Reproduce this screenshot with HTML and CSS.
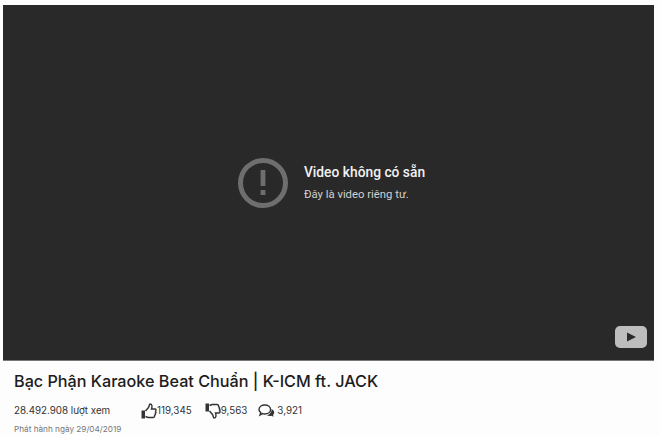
FILE: index.html
```html
<!DOCTYPE html>
<html lang="vi">
<head>
    <meta charset="UTF-8">
    <meta name="viewport" content="width=device-width, initial-scale=1.0">
    <title>Bạc Phận Karaoke Beat Chuẩn</title>
    <link rel="stylesheet" href="styles.css">
</head>
<body>
    <div class="player">
        <div class="error-box">
            <svg class="error-icon" viewBox="0 0 50 50" width="50" height="50">
                <circle cx="25" cy="25" r="22.5" fill="none" stroke="#6e6e6e" stroke-width="5"/>
                <rect x="22.6" y="12" width="4.8" height="16" fill="#6e6e6e"/>
                <rect x="22.6" y="32" width="4.8" height="5" fill="#6e6e6e"/>
            </svg>
            <div class="error-text">
                <h2>Video không có sẵn</h2>
                <p>Đây là video riêng tư.</p>
            </div>
        </div>
        <svg class="yt-logo" viewBox="0 0 32 22" width="32" height="22">
            <rect width="32" height="22" rx="5" fill="#bdbdbd"/>
            <path d="M12 6.5 L21 11 L12 15.5 Z" fill="#2a2a2a"/>
        </svg>
    </div>
    <div class="info">
        <h1>Bạc Phận Karaoke Beat Chuẩn | K-ICM ft. JACK</h1>
        <div class="stats">
            <span class="views">28.492.908 lượt xem</span>
            <span class="stat stat-likes">
                <svg viewBox="0 0 16 16" width="16" height="16">
                    <path d="M0.5 7.5 H4 V15.5 H0.5 Z" fill="#333"/>
                    <path d="M4.5 8 L7.5 4.5 C8.2 3.5 8 2 9 1 C11 1 11.5 3 10.5 6 H14 C15.2 6 15.3 7.5 14.6 8 C15.3 8.8 15 9.8 14.3 10.2 C14.7 11 14.3 12 13.6 12.3 C13.8 13.5 13.2 14.5 12 14.5 H7 L4.5 13.5" fill="none" stroke="#333" stroke-width="1.4"/>
                </svg>
                119,345
            </span>
            <span class="stat">
                <svg viewBox="0 0 16 16" width="16" height="16">
                    <path d="M0.5 0.5 H4 V8.5 H0.5 Z" fill="#333"/>
                    <path d="M4.5 8 L7.5 11.5 C8.2 12.5 8 14 9 15 C11 15 11.5 13 10.5 10 H14 C15.2 10 15.3 8.5 14.6 8 C15.3 7.2 15 6.2 14.3 5.8 C14.7 5 14.3 4 13.6 3.7 C13.8 2.5 13.2 1.5 12 1.5 H7 L4.5 2.5" fill="none" stroke="#333" stroke-width="1.4"/>
                </svg>
                9,563
            </span>
            <span class="stat stat-comments">
                <svg viewBox="0 0 17 16" width="17" height="16">
                    <path d="M1 6.5 C1 3.8 3.6 2 6.8 2 C10 2 12.6 3.8 12.6 6.5 C12.6 9.2 10 11 6.8 11 C6 11 5.2 10.9 4.5 10.6 L2 12 L2.8 9.6 C1.7 8.8 1 7.8 1 6.5 Z" fill="none" stroke="#333" stroke-width="1.4"/>
                    <path d="M13.6 6 C15.2 6.8 16.2 8 16.2 9.4 C16.2 10.4 15.7 11.2 15 11.8 L15.6 13.8 L13.4 12.8 C12 13.2 10 13 8.6 12 C11 12 13.6 10 13.6 6 Z" fill="#333"/>
                </svg>
                3,921
            </span>
        </div>
        <p class="release">Phát hành ngày 29/04/2019</p>
    </div>
</body>
</html>
```

FILE: styles.css
```css
html, body {
    margin: 0;
    padding: 0;
    height: 436px;
    overflow: hidden;
}
body {
    background-color: #fdfdfd;
    color: #222;
    font-family: Inter, "Liberation Sans", sans-serif;
    padding: 5px 6px 0 3px;
    box-sizing: border-box;
}
.player {
    position: relative;
    height: 356px;
    background-color: #292929;
    border-bottom: 1px solid #777;
    box-sizing: border-box;
    display: flex;
    align-items: center;
    justify-content: center;
}
.error-box {
    display: flex;
    align-items: center;
    gap: 16px;
    margin-left: 6px;
}
.error-icon {
    display: block;
}
.error-text {
    font-family: Roboto, "Liberation Sans", sans-serif;
    color: #f1f1f1;
}
.error-text h2 {
    margin: 0 0 6px 0;
    font-size: 13.8px;
    line-height: 18px;
    font-weight: 500;
}
.error-text p {
    margin: 0;
    font-size: 11.3px;
    line-height: 15px;
    color: #d0d0d0;
}
.yt-logo {
    position: absolute;
    right: 7px;
    bottom: 12px;
}
.info {
    padding: 8px 0 0 11px;
}
.info h1 {
    margin: 0;
    font-size: 16.2px;
    line-height: 24px;
    font-weight: 500;
    color: #1c1c1c;
}
.stats {
    display: flex;
    align-items: center;
    margin-top: 10px;
    font-size: 9.8px;
    line-height: 16px;
    color: #333;
}
.views {
    width: 127px;
}
.stat {
    display: flex;
    align-items: center;
    margin-right: 11px;
}
.stat-likes {
    margin-right: 13px;
}
.stat-comments svg {
    margin-right: 2px;
}
.release {
    margin: 4px 0 0 0;
    font-size: 8.2px;
    line-height: 12px;
    color: #777;
}
```
